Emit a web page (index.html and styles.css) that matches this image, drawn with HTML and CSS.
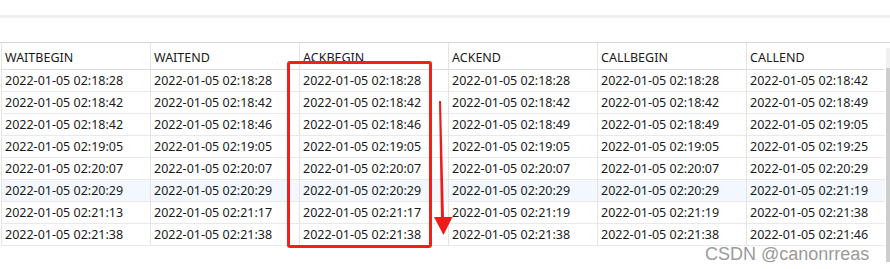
FILE: index.html
```html
<!DOCTYPE html>
<html>
<head>
<meta charset="utf-8">
<link rel="stylesheet" href="styles.css">
</head>
<body>
<div class="page">
  <div class="top-gap"></div>
  <div class="band"></div>
  <div class="toolbar"></div>
  <div class="table-area">
    <div class="grid">
      <div class="cell head">WAITBEGIN</div>
      <div class="cell head">WAITEND</div>
      <div class="cell head">ACKBEGIN</div>
      <div class="cell head">ACKEND</div>
      <div class="cell head">CALLBEGIN</div>
      <div class="cell head">CALLEND</div>

      <div class="cell">2022-01-05 02:18:28</div>
      <div class="cell">2022-01-05 02:18:28</div>
      <div class="cell">2022-01-05 02:18:28</div>
      <div class="cell">2022-01-05 02:18:28</div>
      <div class="cell">2022-01-05 02:18:28</div>
      <div class="cell">2022-01-05 02:18:42</div>

      <div class="cell">2022-01-05 02:18:42</div>
      <div class="cell">2022-01-05 02:18:42</div>
      <div class="cell">2022-01-05 02:18:42</div>
      <div class="cell">2022-01-05 02:18:42</div>
      <div class="cell">2022-01-05 02:18:42</div>
      <div class="cell">2022-01-05 02:18:49</div>

      <div class="cell">2022-01-05 02:18:42</div>
      <div class="cell">2022-01-05 02:18:46</div>
      <div class="cell">2022-01-05 02:18:46</div>
      <div class="cell">2022-01-05 02:18:49</div>
      <div class="cell">2022-01-05 02:18:49</div>
      <div class="cell">2022-01-05 02:19:05</div>

      <div class="cell">2022-01-05 02:19:05</div>
      <div class="cell">2022-01-05 02:19:05</div>
      <div class="cell">2022-01-05 02:19:05</div>
      <div class="cell">2022-01-05 02:19:05</div>
      <div class="cell">2022-01-05 02:19:05</div>
      <div class="cell">2022-01-05 02:19:25</div>

      <div class="cell">2022-01-05 02:20:07</div>
      <div class="cell">2022-01-05 02:20:07</div>
      <div class="cell">2022-01-05 02:20:07</div>
      <div class="cell">2022-01-05 02:20:07</div>
      <div class="cell">2022-01-05 02:20:07</div>
      <div class="cell">2022-01-05 02:20:29</div>

      <div class="cell alt">2022-01-05 02:20:29</div>
      <div class="cell alt">2022-01-05 02:20:29</div>
      <div class="cell alt">2022-01-05 02:20:29</div>
      <div class="cell alt">2022-01-05 02:20:29</div>
      <div class="cell alt">2022-01-05 02:20:29</div>
      <div class="cell alt">2022-01-05 02:21:19</div>

      <div class="cell">2022-01-05 02:21:13</div>
      <div class="cell">2022-01-05 02:21:17</div>
      <div class="cell">2022-01-05 02:21:17</div>
      <div class="cell">2022-01-05 02:21:19</div>
      <div class="cell">2022-01-05 02:21:19</div>
      <div class="cell">2022-01-05 02:21:38</div>

      <div class="cell">2022-01-05 02:21:38</div>
      <div class="cell">2022-01-05 02:21:38</div>
      <div class="cell">2022-01-05 02:21:38</div>
      <div class="cell">2022-01-05 02:21:38</div>
      <div class="cell">2022-01-05 02:21:38</div>
      <div class="cell">2022-01-05 02:21:46</div>
    </div>
    <div class="scrollbar"><div class="scroll-head"></div><div class="scroll-thumb"></div></div>
  </div>

  <div class="highlight-box"></div>
  <svg class="arrow" width="24" height="140" viewBox="0 0 24 140">
    <polygon points="5,0 7,0 10,118 7,118" fill="#ee1b1b"/>
    <polygon points="0,116 18.5,116 9.5,134" fill="#ee1b1b"/>
  </svg>
  <div class="watermark">CSDN @canonrreas</div>
</div>
</body>
</html>
```

FILE: styles.css
```css
html, body {
  margin: 0;
  padding: 0;
  background: #ffffff;
}

.page {
  position: relative;
  width: 890px;
  height: 269px;
  overflow: hidden;
  font-family: "Noto Sans", "Open Sans", sans-serif;
  color: #1a1a1a;
}

.top-gap {
  height: 15px;
}

.band {
  height: 3px;
  background: #efefef;
}

.toolbar {
  height: 24px;
  border-bottom: 1px solid #d6d6d6;
}

.table-area {
  display: flex;
  align-items: flex-start;
}

.grid {
  display: grid;
  grid-template-columns: 149px 149px 149px 149px 149px 139px;
  padding-left: 1px;
  width: 884px;
}

.cell {
  border-left: 1px solid #e4e4e4;
  border-bottom: 1px solid #e9e9e9;
  height: 21px;
  line-height: 21px;
  padding-left: 3px;
  font-size: 12.5px;
  white-space: nowrap;
  overflow: hidden;
}

.cell.head {
  box-sizing: border-box;
  height: 27px;
  line-height: 17px;
  padding-top: 6px;
  border-bottom: 1px solid #dcdcdc;
}

.cell.alt {
  background: #f2f8fd;
}

.scrollbar {
  margin-left: 1px;
  width: 5px;
  padding-top: 5px;
}

.scroll-head {
  height: 20px;
  background: #f0f0f0;
}

.scroll-thumb {
  height: 194px;
  background: #cdcdcd;
}

.highlight-box {
  position: absolute;
  left: 287px;
  top: 61px;
  width: 145px;
  height: 187px;
  box-sizing: border-box;
  border: 3px solid #f0201a;
  border-radius: 3px;
}

.arrow {
  position: absolute;
  left: 434px;
  top: 101px;
}

.watermark {
  position: absolute;
  left: 705px;
  top: 245px;
  font-family: "Liberation Sans", Arial, sans-serif;
  font-size: 18px;
  line-height: 18px;
  color: #9a9a9a;
  text-shadow: 0 0 1px #ffffff;
  white-space: nowrap;
}
```
